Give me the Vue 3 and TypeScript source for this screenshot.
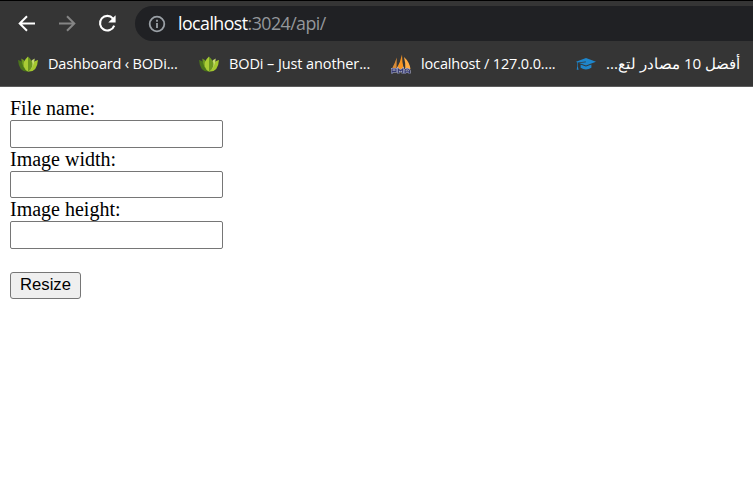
<script setup lang="ts">
import { ref } from 'vue'

type Icon = 'leaf' | 'sails' | 'cap'
interface Bookmark { id: string; icon: Icon; title: string; dir: 'ltr' | 'rtl' }

const bookmarks: Bookmark[] = [
  { id: 'dashboard', icon: 'leaf', title: 'Dashboard ‹ BODi...', dir: 'ltr' },
  { id: 'bodi', icon: 'leaf', title: 'BODi – Just another...', dir: 'ltr' },
  { id: 'local', icon: 'sails', title: 'localhost / 127.0.0....', dir: 'ltr' },
  { id: 'sources', icon: 'cap', title: 'أفضل 10 مصادر لتع...', dir: 'rtl' },
]

const fields = ref([
  { id: 'filename', label: 'File name:', value: '' },
  { id: 'width', label: 'Image width:', value: '' },
  { id: 'height', label: 'Image height:', value: '' },
])
</script>

<template>
  <div class="window">
    <header class="chrome">
      <div class="toolbar">
        <svg class="nav back" viewBox="0 0 20 20"><path d="M18 9.5H3M10 2.2 2.7 9.5l7.3 7.3" /></svg>
        <svg class="nav forward" viewBox="0 0 20 20"><path d="M2 9.5h15M10 2.2l7.3 7.3-7.3 7.3" /></svg>
        <svg class="nav reload" viewBox="0 0 20 20">
          <path d="M16 4.6A7.3 7.3 0 1 0 17.2 11.6" />
          <path class="tip" d="M18.6 1.2v7.3h-7.3z" />
        </svg>
        <div class="address">
          <svg class="info" viewBox="0 0 18 18">
            <circle cx="9" cy="9" r="7.3" />
            <path d="M9 8v5M9 4.8v2" />
          </svg>
          <span class="url"><span class="host">localhost</span>:3024/api/</span>
        </div>
      </div>
      <nav class="bookmarks">
        <a v-for="b in bookmarks" :key="b.id" class="bookmark" :class="b.id">
          <svg v-if="b.icon === 'leaf'" class="icon" viewBox="0 0 20 20">
            <path fill="#4b741c" d="M0 6Q6 6.5 10 17.5 1 18.5 0 6Z" />
            <path fill="#a4c82e" d="M20 6Q14 6.5 10 17.5 19 18.5 20 6Z" />
            <path fill="#6d9821" d="M3.2 4.5Q9 6 10 17.5 4.2 14.5 3.2 4.5Z" />
            <path fill="#c6dc70" d="M16.8 4.5Q11 6 10 17.5 15.8 14.5 16.8 4.5Z" />
            <path fill="#a9cc35" d="M10 2.5Q4.5 7.5 5.8 12.5 7 16 10 17.5Z" />
            <path fill="#6d9821" d="M10 2.5Q15.5 7.5 14.2 12.5 13 16 10 17.5Z" />
          </svg>
          <svg v-else-if="b.icon === 'sails'" class="icon" viewBox="0 0 20 20">
            <path fill="#d98b38" d="M5.8 3.5 5.5 15H0.8Q4 9 5.8 3.5Z" />
            <path fill="#f79421" d="M11 .5Q11 8 12.8 15H5.5Q9.5 8 11 .5Z" />
            <path fill="#ffad46" d="M13 3Q18.5 8 19.5 15H14.3Q14.5 8 13 3Z" />
            <path class="letters-outline" d="M1 19.5v-4.5h4v2.3H1M7.3 19.5v-4.5l2.2 2 2.2-2v4.5M14 19.5v-2.5q0-2 2.2-2t2.3 2v2.5M14 17.8h4.5" />
            <path class="letters" d="M1 19.5v-4.5h4v2.3H1M7.3 19.5v-4.5l2.2 2 2.2-2v4.5M14 19.5v-2.5q0-2 2.2-2t2.3 2v2.5M14 17.8h4.5" />
          </svg>
          <svg v-else class="icon" viewBox="0 0 20 20">
            <path fill="#1e86cc" d="M10 4 20 7.8 10 11.6 3 9 10 8.3 9.7 7.6 1.8 8.6v4l.8 3.2H.7l.5-3.5V8.4L0 7.8Z" />
            <path fill="#1e86cc" d="M4.6 10.4 10 12.5l5.4-2.1v3.4Q10 17 4.6 13.8Z" />
          </svg>
          <span class="title" :dir="b.dir">{{ b.title }}</span>
        </a>
      </nav>
    </header>
    <main class="page">
      <form @submit.prevent>
        <div v-for="f in fields" :key="f.id" class="field">
          <label :for="f.id">{{ f.label }}</label>
          <input :id="f.id" v-model="f.value" type="text">
        </div>
        <button type="submit">Resize</button>
      </form>
    </main>
  </div>
</template>

<style>
body { margin: 0; background: #fff; }
</style>

<style scoped>
.window { width: 753px; height: 481px; overflow: hidden; background: #fff; }
.chrome {
  box-sizing: border-box;
  height: 87px;
  background: #353535;
  border-top: 1px solid #000;
  border-bottom: 1px solid #5c5c5c;
  font-family: "Open Sans", "Noto Sans", sans-serif;
  color: #fff;
}
.toolbar { display: flex; align-items: center; height: 40px; padding: 5px 0 0 17px; box-sizing: border-box; }
.nav { width: 20px; height: 20px; margin-right: 20px; fill: none; stroke: #fff; stroke-width: 2; flex: none; }
.forward { stroke: #858585; }
.reload { margin-right: 18px; stroke-width: 2.1; }
.reload .tip { fill: #fff; stroke: none; }
.address {
  display: flex;
  align-items: center;
  flex: 1;
  height: 35px;
  padding-left: 13px;
  border-radius: 18px 0 0 18px;
  background: #202124;
}
.info { width: 18px; height: 18px; margin-right: 12px; fill: none; stroke: #9aa0a6; stroke-width: 1.8; }
.url { font-size: 17.8px; line-height: 35px; letter-spacing: -0.55px; color: #94979b; white-space: nowrap; }
.host { color: #fff; }
.bookmarks { display: flex; height: 45px; align-items: center; padding-left: 18px; }
.bookmark { display: flex; align-items: center; height: 24px; }
.icon { width: 20px; height: 20px; margin-right: 10px; flex: none; }
.title { display: block; font-size: 14.5px; line-height: 24px; white-space: nowrap; }
.dashboard { width: 181px; }
.dashboard .title { letter-spacing: -0.18px; }
.bodi { width: 192px; }
.bodi .title { letter-spacing: -0.1px; }
.local { width: 185px; }
.local .title { letter-spacing: -0.15px; }
.sources .title { font-size: 15.2px; line-height: 22px; padding-bottom: 2px; }
.letters-outline { fill: none; stroke: #b9bdd8; stroke-width: 2.2; }
.letters { fill: none; stroke: #34386f; stroke-width: 1.2; }
.page { padding: 10px; }
.field { display: grid; grid-template-rows: 23px 28px; }
.field:nth-child(2) { grid-template-rows: 23px 27px; }
label { font: 20px/23px "Liberation Serif", serif; color: #000; }
input {
  box-sizing: border-box;
  width: 213px;
  height: 100%;
  margin: 0;
  padding: 0;
  border: 1px solid #767676;
  border-radius: 2px;
  background: #fff;
}
button {
  display: block;
  box-sizing: border-box;
  width: 71px;
  height: 27px;
  margin: 23px 0 0;
  padding: 0 0 2px;
  border: 1px solid #767676;
  border-radius: 3px;
  background: #efefef;
  color: #000;
  font: 16.67px/23px "Liberation Sans", sans-serif;
}
</style>
